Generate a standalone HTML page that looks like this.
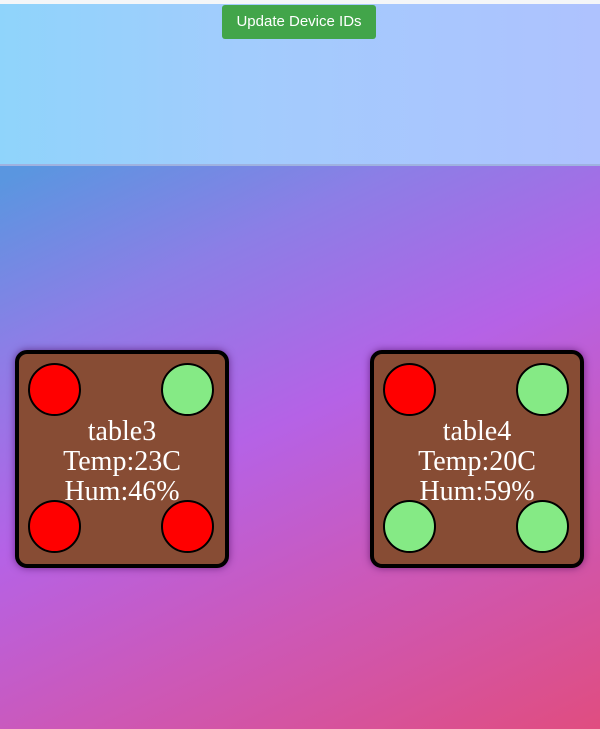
<!DOCTYPE html>
<html><head><meta charset="utf-8"><style>
html,body{margin:0;padding:0;width:600px;height:729px;overflow:hidden;}
body{position:relative;background:linear-gradient(155deg,#4f9be0 0%,#5a96e0 18%,#8c7ee6 35%,#b562e6 55%,#cc58b8 75%,#e04d80 100%);font-family:"Liberation Serif",serif;}
.top{position:absolute;left:0;top:0;width:600px;height:166px;background:linear-gradient(90deg,#8fd4fb 0%,#a2ccfd 40%,#aec2fe 100%);border-top:4px solid #f4f6f8;box-sizing:border-box;border-bottom:2px solid #9fb2e0;}
.btn{position:absolute;left:222px;top:1px;width:154px;height:34px;background:#42a54a;border-radius:3px;color:#fff;font-family:"Liberation Sans",sans-serif;font-size:15px;line-height:34px;text-align:center;}
.card{position:absolute;top:350px;width:206px;height:210px;background:#874c34;border:4px solid #000;border-radius:12px;box-shadow:0 0 8px rgba(60,0,80,.6);}
.c{position:absolute;width:49px;height:49px;border:2.5px solid #000;border-radius:50%;}
.r{background:#ff0000}.g{background:#85ea85}
.t{position:absolute;left:0;right:0;top:63px;text-align:center;color:#fff;font-size:28px;line-height:30px;}
</style></head><body>
<div class="top"><div class="btn">Update Device IDs</div></div>
<div class="card" style="left:15px">
<div class="c r" style="left:9px;top:9px"></div><div class="c g" style="left:142px;top:9px"></div>
<div class="c r" style="left:9px;top:146px"></div><div class="c r" style="left:142px;top:146px"></div>
<div class="t">table3<br>Temp:23C<br>Hum:46%</div></div>
<div class="card" style="left:370px">
<div class="c r" style="left:9px;top:9px"></div><div class="c g" style="left:142px;top:9px"></div>
<div class="c g" style="left:9px;top:146px"></div><div class="c g" style="left:142px;top:146px"></div>
<div class="t">table4<br>Temp:20C<br>Hum:59%</div></div>
</body></html>
